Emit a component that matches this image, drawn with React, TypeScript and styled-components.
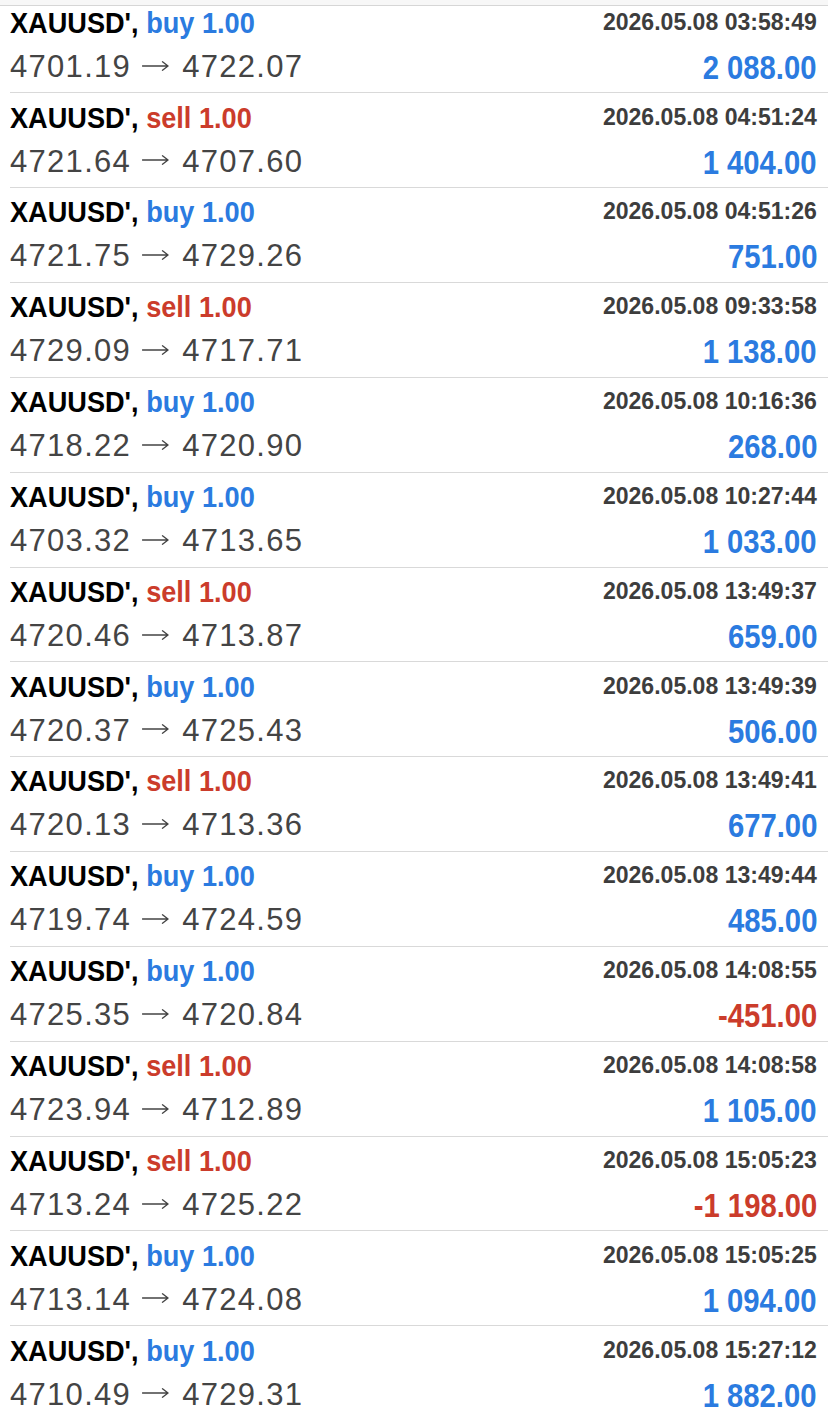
import styled, { createGlobalStyle } from "styled-components";

type Side = "buy" | "sell";

interface Deal {
  side: Side;
  open: string;
  close: string;
  time: string;
  profit: string;
}

const deals: Deal[] = [
  { side: "buy", open: "4701.19", close: "4722.07", time: "03:58:49", profit: "2 088.00" },
  { side: "sell", open: "4721.64", close: "4707.60", time: "04:51:24", profit: "1 404.00" },
  { side: "buy", open: "4721.75", close: "4729.26", time: "04:51:26", profit: "751.00" },
  { side: "sell", open: "4729.09", close: "4717.71", time: "09:33:58", profit: "1 138.00" },
  { side: "buy", open: "4718.22", close: "4720.90", time: "10:16:36", profit: "268.00" },
  { side: "buy", open: "4703.32", close: "4713.65", time: "10:27:44", profit: "1 033.00" },
  { side: "sell", open: "4720.46", close: "4713.87", time: "13:49:37", profit: "659.00" },
  { side: "buy", open: "4720.37", close: "4725.43", time: "13:49:39", profit: "506.00" },
  { side: "sell", open: "4720.13", close: "4713.36", time: "13:49:41", profit: "677.00" },
  { side: "buy", open: "4719.74", close: "4724.59", time: "13:49:44", profit: "485.00" },
  { side: "buy", open: "4725.35", close: "4720.84", time: "14:08:55", profit: "-451.00" },
  { side: "sell", open: "4723.94", close: "4712.89", time: "14:08:58", profit: "1 105.00" },
  { side: "sell", open: "4713.24", close: "4725.22", time: "15:05:23", profit: "-1 198.00" },
  { side: "buy", open: "4713.14", close: "4724.08", time: "15:05:25", profit: "1 094.00" },
  { side: "buy", open: "4710.49", close: "4729.31", time: "15:27:12", profit: "1 882.00" },
];

const BLUE = "#2b7be0";
const RED = "#cb3c2b";
const GREY = "#444";

const GlobalStyle = createGlobalStyle`
  html, body {
    margin: 0;
    padding: 0;
    background: #fff;
  }
  body {
    font-family: "Liberation Sans", Arial, Helvetica, sans-serif;
    -webkit-font-smoothing: antialiased;
  }
`;

const Page = styled.div`
  height: 100vh;
  overflow: hidden;
  display: flex;
  flex-direction: column;
`;

const TopBar = styled.div`
  flex: none;
  height: 5px;
  background: #f7f7f7;
  border-bottom: 1px solid #d6d6d6;
`;

const Viewport = styled.div`
  flex: 1;
  overflow: hidden;
`;

// list is scrolled a little, first row sits under the top bar
const List = styled.div`
  margin-top: -7.5px;
`;

const Row = styled.div`
  box-sizing: border-box;
  height: 94.85px;
  margin-left: 10px;
  padding: 4.2px 11px 0 0;
  border-bottom: 1px solid #d9d9d9;
  display: flex;
  justify-content: space-between;
  align-items: flex-start;
`;

const Left = styled.div`
  display: flex;
  flex-direction: column;
  align-items: flex-start;
`;

const Right = styled.div`
  display: flex;
  flex-direction: column;
  align-items: flex-end;
`;

const Title = styled.div`
  display: inline-block;
  font-size: 29.5px;
  line-height: 40px;
  font-weight: 700;
  color: #000;
  white-space: nowrap;
  transform: scaleX(0.92);
  transform-origin: left center;
`;

const SideLabel = styled.span<{ side: Side }>`
  color: ${(p) => (p.side === "buy" ? BLUE : RED)};
`;

const Prices = styled.div`
  font-size: 31px;
  line-height: 48px;
  letter-spacing: 1.3px;
  color: ${GREY};
  white-space: nowrap;
`;

const ArrowIcon = styled.svg`
  width: 27px;
  height: 12px;
  margin: 0 13px 0 11px;
  vertical-align: 5.2px;
`;

const Time = styled.div`
  display: inline-block;
  font-size: 24px;
  line-height: 38px;
  font-weight: 700;
  color: #3d3d3d;
  white-space: nowrap;
  transform: scaleX(0.96);
  transform-origin: right center;
`;

const Profit = styled.div<{ negative: boolean }>`
  display: inline-block;
  font-size: 32.5px;
  line-height: 54px;
  font-weight: 700;
  color: ${(p) => (p.negative ? RED : BLUE)};
  white-space: nowrap;
  transform: scaleX(0.9);
  transform-origin: right center;
`;

const Arrow = () => (
  <ArrowIcon viewBox="0 0 27 12" fill="none">
    <path
      d="M0.5 6H26M20.5 1.8L26 6L20.5 10.2"
      stroke={GREY}
      strokeWidth="1.4"
      strokeLinecap="round"
      strokeLinejoin="round"
    />
  </ArrowIcon>
);

const App = () => {
  return (
    <Page>
      <GlobalStyle />
      <TopBar />
      <Viewport>
        <List>
          {deals.map((d, i) => (
            <Row key={i}>
              <Left>
                <Title>
                  XAUUSD', <SideLabel side={d.side}>{d.side} 1.00</SideLabel>
                </Title>
                <Prices>
                  {d.open}
                  <Arrow />
                  {d.close}
                </Prices>
              </Left>
              <Right>
                <Time>2026.05.08 {d.time}</Time>
                <Profit negative={d.profit.startsWith("-")}>{d.profit}</Profit>
              </Right>
            </Row>
          ))}
        </List>
      </Viewport>
    </Page>
  );
};

export default App;
